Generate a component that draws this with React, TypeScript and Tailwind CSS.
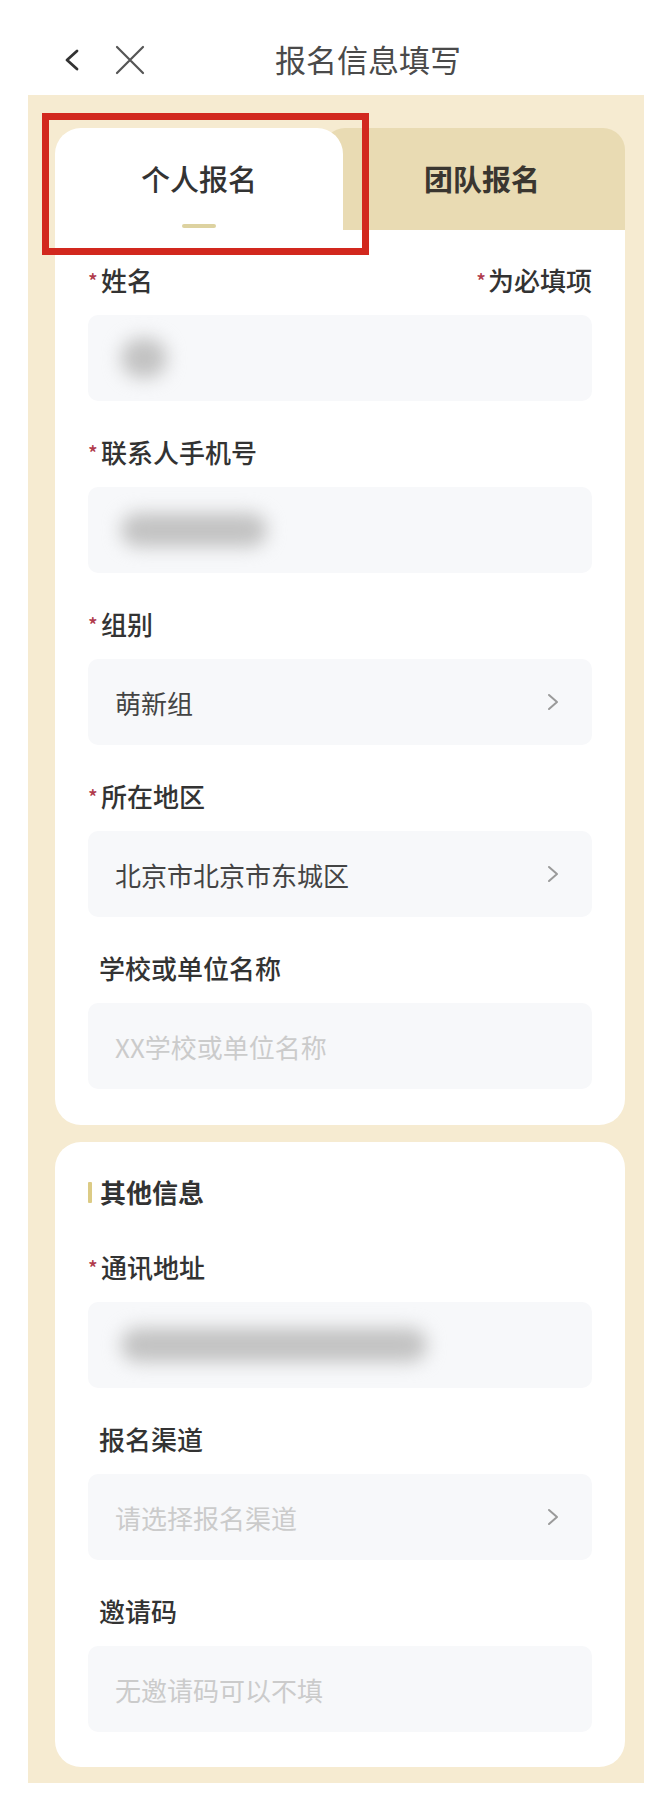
import React from 'react';

type Field = {
  label: string;
  required?: boolean;
  value?: string;
  placeholder?: string;
  blurWidth?: number;
  blurHeight?: number;
  arrow?: boolean;
};

const personal: Field[] = [
  { label: '姓名', required: true, blurWidth: 46, blurHeight: 40 },
  { label: '联系人手机号', required: true, blurWidth: 146, blurHeight: 34 },
  { label: '组别', required: true, value: '萌新组', arrow: true },
  { label: '所在地区', required: true, value: '北京市北京市东城区', arrow: true },
  { label: '学校或单位名称', placeholder: 'XX学校或单位名称' },
];

const other: Field[] = [
  { label: '通讯地址', required: true, blurWidth: 306, blurHeight: 34 },
  { label: '报名渠道', placeholder: '请选择报名渠道', arrow: true },
  { label: '邀请码', placeholder: '无邀请码可以不填' },
];

function Chevron() {
  return (
    <svg width="14" height="24" viewBox="0 0 14 24" fill="none" className="shrink-0">
      <path d="M3 5l8 7-8 7" stroke="#9a9a9a" strokeWidth="2" strokeLinecap="round" strokeLinejoin="round" />
    </svg>
  );
}

function Label({ text, required }: { text: string; required?: boolean }) {
  return (
    <div className="flex items-center h-[30px] leading-[30px] text-[26px] font-medium text-[#333]">
      {required ? (
        <span className="w-[13px] text-[20px] leading-none text-[#b03a4c] translate-y-[1px]">*</span>
      ) : (
        <span className="w-[11px]" />
      )}
      <span>{text}</span>
    </div>
  );
}

function FormField({ field, extra }: { field: Field; extra?: React.ReactNode }) {
  return (
    <div>
      <div className="flex items-center justify-between">
        <Label text={field.label} required={field.required} />
        {extra}
      </div>
      <div className="mt-[20px] h-[86px] rounded-[10px] bg-[#f7f8fa] flex items-center justify-between pl-[27px] pr-[32px]">
        {field.blurWidth ? (
          <div
            className="ml-[6px] rounded-full bg-[#c2c2c2] blur-[9px]"
            style={{ width: field.blurWidth, height: field.blurHeight }}
          />
        ) : field.value ? (
          <span className="text-[26px] text-[#444]">{field.value}</span>
        ) : (
          <span className="text-[26px] text-[#cbcbcb]">{field.placeholder}</span>
        )}
        {field.arrow && <Chevron />}
      </div>
    </div>
  );
}

export default function App() {
  return (
    <div className="w-[672px] min-h-[1796px] bg-white font-['Noto_Sans_CJK_SC','Noto_Sans',sans-serif]">
      {/* top bar */}
      <header className="h-[95px] pt-[24px] flex items-center pl-[62px]">
        <svg width="20" height="26" viewBox="0 0 20 26" fill="none">
          <path d="M15 4L5 13l10 9" stroke="#333" strokeWidth="2.8" strokeLinecap="round" strokeLinejoin="round" />
        </svg>
        <svg width="32" height="32" viewBox="0 0 32 32" fill="none" className="ml-[32px]">
          <path d="M3 3l26 26M29 3L3 29" stroke="#555" strokeWidth="2.2" strokeLinecap="round" />
        </svg>
        <h1 className="ml-[129px] text-[31px] text-[#4a4a4a] font-normal">报名信息填写</h1>
      </header>

      <div className="relative mx-[28px] bg-[#f6ebd1] pt-[33px] pb-[16px] pl-[27px] pr-[19px]">
        {/* tabs */}
        <div className="flex h-[102px]">
          <div className="relative z-10 w-[288px] rounded-t-[26px] bg-white flex flex-col items-center pt-[30px]">
            <span className="text-[29px] leading-[40px] font-medium text-[#333]">个人报名</span>
            <span className="mt-[26px] w-[34px] h-[4px] rounded-full bg-[#ddd2a0]" />
          </div>
          <div className="flex-1 -ml-[20px] rounded-t-[22px] bg-[#e9dbb3] flex justify-center pl-[16px] pt-[30px]">
            <span className="text-[29px] leading-[40px] font-semibold text-[#3a3630]">团队报名</span>
          </div>
        </div>

        {/* personal info card */}
        <div className="bg-white rounded-b-[26px] px-[33px] pt-[35px] pb-[36px] flex flex-col gap-[36px]">
          {personal.map((f, i) => (
            <FormField
              key={f.label}
              field={f}
              extra={
                i === 0 ? (
                  <div className="flex items-center text-[26px] font-medium text-[#333] leading-[30px]">
                    <span className="text-[20px] leading-none text-[#b03a4c] translate-y-[1px] mr-[2px]">*</span>
                    为必填项
                  </div>
                ) : undefined
              }
            />
          ))}
        </div>

        {/* other info card */}
        <div className="mt-[17px] bg-white rounded-[26px] px-[33px] pt-[35px] pb-[35px]">
          <div className="flex items-center h-[30px]">
            <span className="w-[4px] h-[21px] bg-[#dccb85] rounded-[1px]" />
            <span className="ml-[8px] text-[26px] font-semibold text-[#333] leading-[30px]">其他信息</span>
          </div>
          <div className="mt-[45px] flex flex-col gap-[36px]">
            {other.map((f) => (
              <FormField key={f.label} field={f} />
            ))}
          </div>
        </div>

        {/* highlight annotation */}
        <div className="absolute left-[14px] top-[18px] w-[327px] h-[142px] border-[7px] border-[#d2281e] z-20 pointer-events-none" />
      </div>
    </div>
  );
}
